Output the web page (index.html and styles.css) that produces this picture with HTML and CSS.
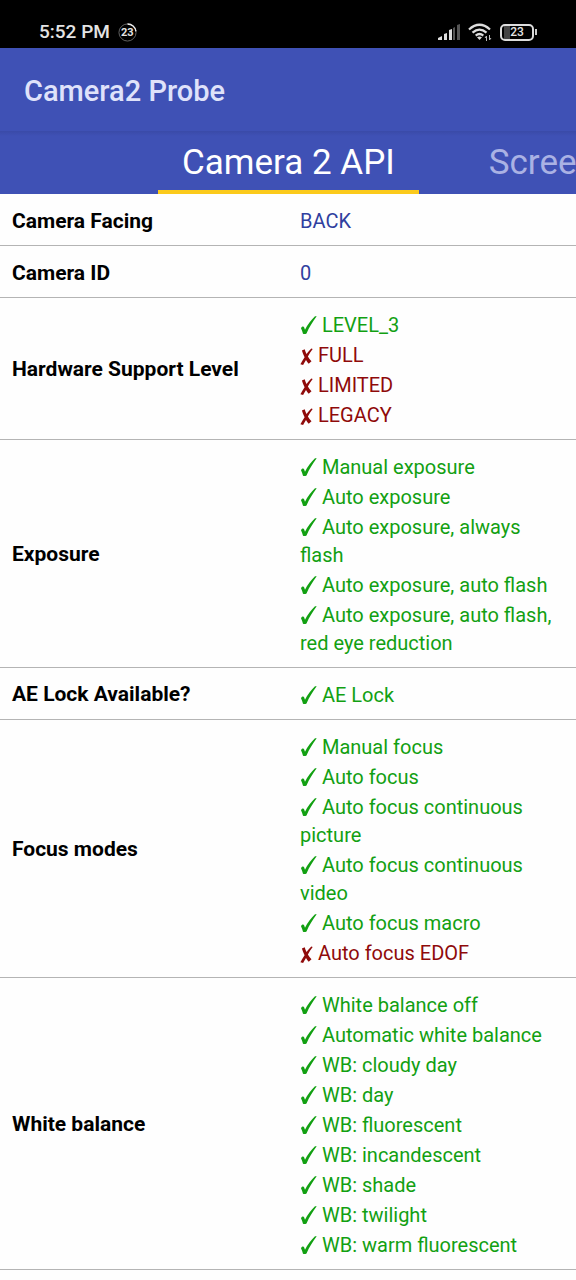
FILE: index.html
```html
<!DOCTYPE html>
<html lang="en">
<head>
<meta charset="utf-8">
<meta name="viewport" content="width=device-width, initial-scale=1">
<title>Camera2 Probe</title>
<link rel="stylesheet" href="styles.css">
</head>
<body>
<svg class="sprite" aria-hidden="true">
  <symbol id="check" viewBox="0 0 17 20"><path d="M1 13.2 C1.5 11.6 3.6 11 4.1 12.3 L5 14.8 C7.400 10 11.200 4.900 15 1.300 L16.700 1.300 C12.900 6.200 9.200 12.400 6.500 18.400 C5.400 19 4 19 3 18.700 C2.500 16.900 1.900 15 1 13.200Z"/></symbol>
  <symbol id="cross" viewBox="0 0 13 20"><path d="M1.900 5.600 L4.700 4.300 C5.200 6.200 5.800 7.700 6.500 9.100 C7.900 7 9.500 5 11.300 3.400 L12.700 4 C10.900 6.300 9.400 8.800 7.900 11.600 C8.900 13.400 10 14.900 11.500 16.200 L8.700 18.700 C7.600 17.400 6.800 16.200 6 14.900 C5 16.600 4 18.200 3.100 20 L0.400 19.200 C1.700 16.800 3 14.400 4.600 12.200 C3.400 10 2.500 7.800 1.900 5.600Z"/></symbol>
</svg>

<div class="status">
  <div class="status-group">
    <time>5:52 PM</time>
    <span class="ring">
      <svg viewBox="0 0 20 20" aria-hidden="true"><circle cx="10" cy="10" r="9" stroke="#666"/><path d="M10 1a9 9 0 0 1 8.9 7.8" stroke="#eee" stroke-width="1.5"/></svg>
      <span>23</span>
    </span>
  </div>
  <div class="status-group icons">
    <svg class="signal" viewBox="0 0 22 16" aria-hidden="true"><path fill="#ddd" d="M0 16v-2l4-2v4zM6 16v-6l3-1v7zM11 16V6l3-1v11z"/><path fill="#555" d="M15 16V4l2-1v13zM19 16V1l3-1v16z"/></svg>
    <svg class="wifi" viewBox="0 0 24 18" aria-hidden="true"><g fill="none" stroke="#ddd" stroke-width="2.3"><path d="M1 6.5Q11.500-3 22 6.500"/><path d="M4.500 9.700Q11.500 3.500 18.500 9.700"/><path d="M7.700 12.600Q11.500 9.500 15.300 12.600"/></g><path fill="#ddd" d="M9 14.300Q11.500 12.800 14 14.300L11.500 17z"/><path fill="none" stroke="#bbb" d="M18.500 18v-5l-1.500 2M21.500 12v5l1.500-2"/></svg>
    <span class="battery"><span>23</span></span>
  </div>
</div>

<header class="appbar"><h1>Camera2 Probe</h1></header>

<nav class="tabs" aria-label="Sections">
  <button class="tab active" type="button">Camera 2 API</button>
  <button class="tab" type="button">Screen</button>
</nav>

<table class="specs">
  <tbody>
    <tr class="plain"><th scope="row">Camera Facing</th><td>BACK</td></tr>
    <tr class="plain"><th scope="row">Camera ID</th><td>0</td></tr>
    <tr><th scope="row">Hardware Support Level</th><td><ul>
      <li class="yes"><svg class="mark" role="img" aria-label="Yes"><use href="#check"/></svg> LEVEL_3</li>
      <li class="no"><svg class="mark" role="img" aria-label="No"><use href="#cross"/></svg> FULL</li>
      <li class="no"><svg class="mark" role="img" aria-label="No"><use href="#cross"/></svg> LIMITED</li>
      <li class="no"><svg class="mark" role="img" aria-label="No"><use href="#cross"/></svg> LEGACY</li>
    </ul></td></tr>
    <tr><th scope="row">Exposure</th><td><ul>
      <li class="yes"><svg class="mark" role="img" aria-label="Yes"><use href="#check"/></svg> Manual exposure</li>
      <li class="yes"><svg class="mark" role="img" aria-label="Yes"><use href="#check"/></svg> Auto exposure</li>
      <li class="yes"><svg class="mark" role="img" aria-label="Yes"><use href="#check"/></svg> Auto exposure, always flash</li>
      <li class="yes"><svg class="mark" role="img" aria-label="Yes"><use href="#check"/></svg> Auto exposure, auto flash</li>
      <li class="yes"><svg class="mark" role="img" aria-label="Yes"><use href="#check"/></svg> Auto exposure, auto flash, red eye reduction</li>
    </ul></td></tr>
    <tr><th scope="row">AE Lock Available?</th><td><ul>
      <li class="yes"><svg class="mark" role="img" aria-label="Yes"><use href="#check"/></svg> AE Lock</li>
    </ul></td></tr>
    <tr><th scope="row">Focus modes</th><td><ul>
      <li class="yes"><svg class="mark" role="img" aria-label="Yes"><use href="#check"/></svg> Manual focus</li>
      <li class="yes"><svg class="mark" role="img" aria-label="Yes"><use href="#check"/></svg> Auto focus</li>
      <li class="yes"><svg class="mark" role="img" aria-label="Yes"><use href="#check"/></svg> Auto focus continuous picture</li>
      <li class="yes"><svg class="mark" role="img" aria-label="Yes"><use href="#check"/></svg> Auto focus continuous video</li>
      <li class="yes"><svg class="mark" role="img" aria-label="Yes"><use href="#check"/></svg> Auto focus macro</li>
      <li class="no"><svg class="mark" role="img" aria-label="No"><use href="#cross"/></svg> Auto focus EDOF</li>
    </ul></td></tr>
    <tr><th scope="row">White balance</th><td><ul>
      <li class="yes"><svg class="mark" role="img" aria-label="Yes"><use href="#check"/></svg> White balance off</li>
      <li class="yes"><svg class="mark" role="img" aria-label="Yes"><use href="#check"/></svg> Automatic white balance</li>
      <li class="yes"><svg class="mark" role="img" aria-label="Yes"><use href="#check"/></svg> WB: cloudy day</li>
      <li class="yes"><svg class="mark" role="img" aria-label="Yes"><use href="#check"/></svg> WB: day</li>
      <li class="yes"><svg class="mark" role="img" aria-label="Yes"><use href="#check"/></svg> WB: fluorescent</li>
      <li class="yes"><svg class="mark" role="img" aria-label="Yes"><use href="#check"/></svg> WB: incandescent</li>
      <li class="yes"><svg class="mark" role="img" aria-label="Yes"><use href="#check"/></svg> WB: shade</li>
      <li class="yes"><svg class="mark" role="img" aria-label="Yes"><use href="#check"/></svg> WB: twilight</li>
      <li class="yes"><svg class="mark" role="img" aria-label="Yes"><use href="#check"/></svg> WB: warm fluorescent</li>
    </ul></td></tr>
  </tbody>
</table>
</body>
</html>
```
FILE: styles.css
```css
* { box-sizing: border-box; }

body {
  margin: 0;
  background: #fefefe;
  color: #000;
  font-family: Roboto, "Liberation Sans", sans-serif;
  font-size: 20px;
  line-height: 28px;
}

.sprite { display: none; }

.status {
  display: flex;
  justify-content: space-between;
  height: 48px;
  padding: 16px 39px 0;
  background: #000;
  color: #e4e4e4;
}

.status-group {
  display: flex;
  align-items: center;
  gap: 8px;
  height: 32px;
}

time {
  font-size: 19px;
  font-weight: 500;
}

.ring {
  display: grid;
  place-items: center;
  width: 19px;
  height: 19px;
  font-size: 11px;
  font-weight: 700;
  line-height: 19px;
}

.ring > * { grid-area: 1 / 1; }
.ring svg { width: 19px; height: 19px; fill: none; }

.signal { width: 22px; height: 16px; }
.wifi { width: 24px; height: 18px; }

.battery {
  display: flex;
  align-items: center;
}

.battery span {
  width: 34px;
  height: 17px;
  border: 2px solid #ddd;
  border-radius: 5px;
  background: linear-gradient(90deg, #000 2px, #444 2px 8px, #000 8px);
  font-size: 12px;
  font-weight: 500;
  line-height: 13px;
  text-align: center;
}

.battery::after {
  content: "";
  width: 2px;
  height: 6px;
  margin-left: 1px;
  background: #ccc;
}

.appbar {
  height: 83px;
  padding: 23px 24px;
  background: #3f51b5;
}

.appbar h1 {
  margin: 0;
  color: #dfe2fa;
  font-size: 29px;
  font-weight: 500;
  line-height: 40px;
}

.tabs {
  display: flex;
  gap: 46px;
  height: 63px;
  padding-left: 158px;
  overflow: hidden;
  background: linear-gradient(#3a4aa8, #3f51b5 5px);
}

.tab {
  flex: none;
  padding: 5px 24px 0;
  border: 0;
  border-bottom: 4px solid transparent;
  background: none;
  color: #aab2e4;
  font: 400 35px/48px Roboto, "Liberation Sans", sans-serif;
}

.tab.active {
  border-color: #fbca1c;
  color: #fff;
}

.specs {
  width: 100%;
  border-collapse: collapse;
  table-layout: fixed;
}

.specs tr { border-bottom: 1px solid #b4b4b4; }

th, td {
  padding: 11px 12px 10px;
  text-align: left;
  vertical-align: middle;
}

.plain th, .plain td { padding: 13px 12px 10px; }

th {
  font-size: 21px;
  font-weight: 700;
}

td { color: #303f9f; }

ul {
  margin: 0;
  padding: 0;
  list-style: none;
}

li { padding-top: 2px; }
.yes { color: #12a012; }
.no { color: #8f0a0a; }

.mark {
  width: 17px;
  height: 20px;
  fill: currentColor;
  vertical-align: -3px;
}

.no .mark { width: 13px; }
```
